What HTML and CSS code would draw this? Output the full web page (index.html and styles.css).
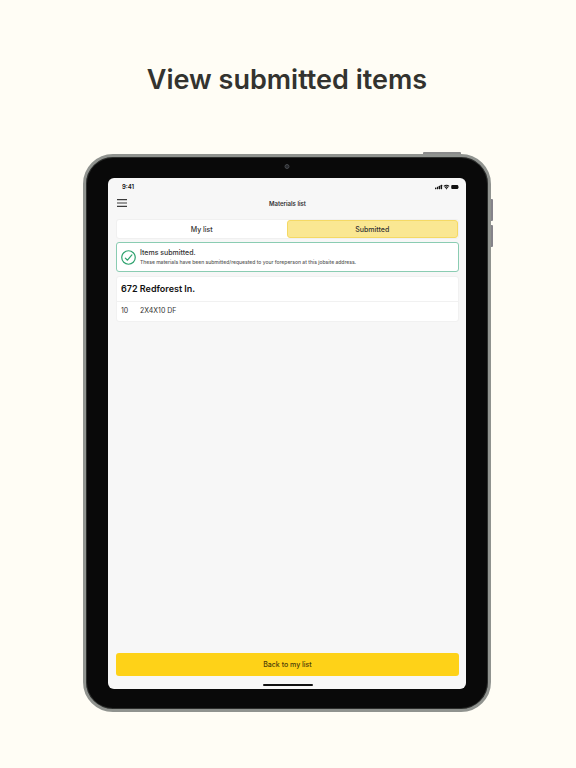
FILE: index.html
```
<!DOCTYPE html>
<html lang="en">
<head>
    <meta charset="UTF-8">
    <meta name="viewport" content="width=device-width, initial-scale=1.0">
    <title>View submitted items</title>
    <link rel="stylesheet" href="styles.css">
</head>
<body>
    <h1 class="headline">View submitted items</h1>

    <div class="tablet">
        <span class="power-button"></span>
        <span class="volume-button volume-up"></span>
        <span class="volume-button volume-down"></span>
        <span class="camera"></span>

        <main class="screen">
            <div class="status-bar">
                <span class="time">9:41</span>
                <svg class="status-icons" viewBox="0 0 48 12" aria-hidden="true">
                    <rect x="0" y="7" width="2.8" height="3.4" rx="0.8"/>
                    <rect x="3.8" y="5.4" width="2.8" height="5" rx="0.8"/>
                    <rect x="7.6" y="3.6" width="2.8" height="6.8" rx="0.8"/>
                    <rect x="11.4" y="1.6" width="2.8" height="8.8" rx="0.8"/>
                    <path d="M17 4 A9 9 0 0 1 29 4 L27.6 5.5 A7 7 0 0 0 18.4 5.5 Z"/>
                    <path d="M19.2 6.5 A5.6 5.6 0 0 1 26.8 6.5 L25.4 8 A3.8 3.8 0 0 0 20.6 8 Z"/>
                    <path d="M21.1 9 A2.6 2.6 0 0 1 24.9 9 L23 11 Z"/>
                    <rect x="32.5" y="2" width="14" height="8" rx="2"/>
                    <rect x="47" y="4.8" width="1" height="2.6" rx="0.5"/>
                </svg>
            </div>

            <header class="app-header">
                <button class="menu-btn" type="button" aria-label="Menu">
                    <svg viewBox="0 0 10 8"><path d="M0 0.6h10M0 4h10M0 7.4h10"/></svg>
                </button>
                <h2>Materials list</h2>
            </header>

            <nav class="tabs">
                <button class="tab" type="button">My list</button>
                <button class="tab active" type="button">Submitted</button>
            </nav>

            <div class="notice">
                <svg class="notice-icon" viewBox="0 0 16 16" aria-hidden="true">
                    <circle cx="8" cy="8" r="7.2"/>
                    <path d="M4.6 8.6l2.3 2.3 4.7-5.6"/>
                </svg>
                <div>
                    <p class="notice-title">Items submitted.</p>
                    <p class="notice-text">These materials have been submitted/requested to your foreperson at this jobsite address.</p>
                </div>
            </div>

            <section class="card">
                <h3>672 Redforest In.</h3>
                <div class="item">
                    <span class="qty">10</span>
                    <span>2X4X10 DF</span>
                </div>
            </section>

            <button class="back-btn" type="button">Back to my list</button>
            <div class="home-bar"></div>
        </main>
    </div>
</body>
</html>
```
FILE: styles.css
```
* {
    margin: 0;
    padding: 0;
    box-sizing: border-box;
}
body {
    display: flex;
    flex-direction: column;
    min-height: 100vh;
    padding: 60px 85px 56px 83px;
    background: #fffdf5;
    font-family: Inter, 'Liberation Sans', sans-serif;
    color: #333;
}
.headline {
    margin-bottom: 54px;
    font-size: 27px;
    line-height: 40px;
    font-weight: 600;
    text-align: center;
    color: #33332f;
}
button {
    border: none;
    font-family: inherit;
    font-size: 7px;
    font-weight: 500;
    color: #333;
    cursor: pointer;
}

/* Tablet frame */
.tablet {
    position: relative;
    flex: 1;
    display: flex;
    padding: 21px 22px 20px;
    background: #090909;
    border: 3px solid #90938f;
    border-radius: 30px;
    box-shadow: inset 0 0 0 1px #2c2e2c;
}
.power-button {
    position: absolute;
    top: -5px;
    right: 27px;
    width: 38px;
    height: 2px;
    background: #8b8b8b;
    border-radius: 1px 1px 0 0;
}
.volume-button {
    position: absolute;
    right: -5px;
    width: 2px;
    height: 22px;
    background: #85838a;
    border-radius: 0 1px 1px 0;
}
.volume-up {
    top: 42px;
}
.volume-down {
    top: 68px;
}
.camera {
    position: absolute;
    top: 7px;
    left: 50%;
    width: 5px;
    height: 5px;
    background: #26282c;
    border: 1px solid #45484c;
    border-radius: 50%;
    transform: translateX(-50%);
}

/* App screen */
.screen {
    flex: 1;
    display: flex;
    flex-direction: column;
    padding: 4px 7px 3px 8px;
    background: #f7f7f7;
    border-radius: 6px;
}
.status-bar {
    display: flex;
    justify-content: space-between;
    align-items: center;
    height: 9px;
    padding: 0 0 0 6px;
}
.time {
    font-size: 6px;
    font-weight: 600;
    color: #111;
}
.status-icons {
    width: 24px;
    height: 6px;
    fill: #111;
}
.app-header {
    display: grid;
    grid-template-columns: 20px 1fr 20px;
    align-items: center;
    height: 24px;
    margin-bottom: 4px;
}
.app-header h2 {
    font-size: 6px;
    font-weight: 600;
    text-align: center;
}
.menu-btn {
    display: flex;
    padding-left: 1px;
    background: none;
}
.menu-btn svg {
    width: 10px;
    height: 8px;
    stroke: #3c3c3c;
    stroke-width: 1.2;
}
.tabs {
    display: flex;
    height: 20px;
    margin-bottom: 3px;
    background: #fff;
    border: 1px solid #f0f0f0;
    border-radius: 3px;
}
.tab {
    flex: 1;
    background: none;
    border-radius: 3px;
}
.tab.active {
    background: #fae792;
    border: 1px solid #f5d964;
}
.notice {
    display: flex;
    align-items: center;
    gap: 4px;
    height: 30px;
    margin-bottom: 4px;
    padding: 0 4px;
    background: #fff;
    border: 1px solid #8accb2;
    border-radius: 3px;
}
.notice-icon {
    width: 15px;
    height: 15px;
    fill: none;
    stroke: #2fa36f;
    stroke-width: 1.3;
    stroke-linecap: round;
    stroke-linejoin: round;
}
.notice-title {
    font-size: 7px;
    line-height: 10px;
    font-weight: 500;
}
.notice-text {
    font-size: 5px;
    line-height: 8px;
    font-weight: 500;
    color: #555;
}
.card {
    background: #fff;
    border: 1px solid #f1f1f1;
    border-radius: 3px;
}
.card h3 {
    padding: 0 4px;
    font-size: 9px;
    line-height: 24px;
    font-weight: 600;
    color: #111;
    border-bottom: 1px solid #f1f1f1;
}
.item {
    display: flex;
    padding: 0 4px 1px;
    font-size: 7px;
    line-height: 18px;
}
.qty {
    width: 19px;
}
.back-btn {
    height: 23px;
    margin-top: auto;
    background: #fed218;
    border-radius: 3px;
    color: #4a3c08;
}
.home-bar {
    align-self: center;
    width: 50px;
    height: 2px;
    margin-top: 8px;
    background: #111;
    border-radius: 1px;
}
```
